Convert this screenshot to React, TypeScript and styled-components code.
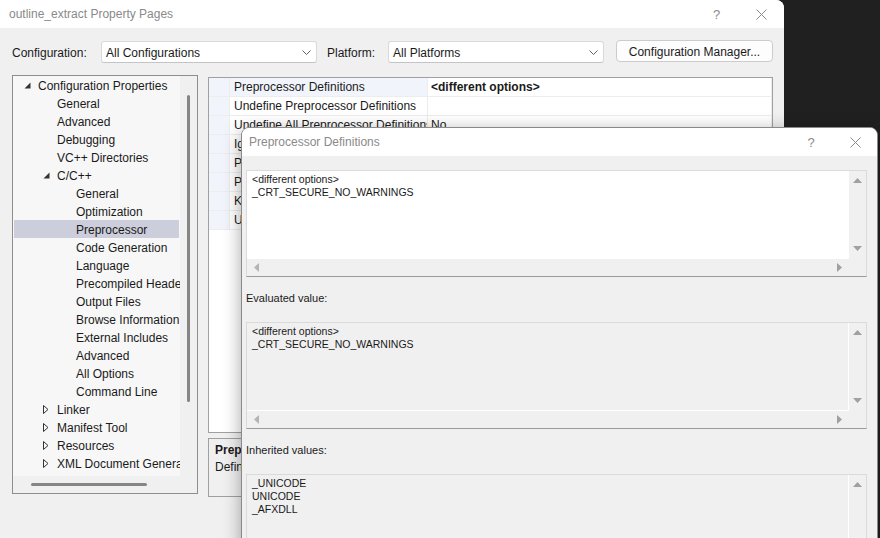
import React from "react";
import styled, { createGlobalStyle } from "styled-components";

const GlobalStyle = createGlobalStyle`
  html, body {
    margin: 0;
    padding: 0;
    background: #202020;
    overflow: hidden;
  }
  body {
    font-family: "Liberation Sans", Arial, sans-serif;
    font-size: 12px;
    color: #1a1a1a;
  }
`;

const Desktop = styled.div`
  position: relative;
  width: 880px;
  height: 538px;
  overflow: hidden;
  background: #202020;
`;

const Window = styled.div`
  width: 784px;
  height: 538px;
  background: #f0f0f0;
  border-top-right-radius: 8px;
  display: flex;
  flex-direction: column;
  overflow: hidden;
`;

const TitleBar = styled.div<{ $inset: number }>`
  height: 28px;
  flex: none;
  background: #fff;
  display: flex;
  align-items: center;
  padding-left: ${(p) => p.$inset}px;
  color: #8a8a8a;
`;

const TitleText = styled.span`
  flex: 1;
  white-space: nowrap;
`;

const CaptionButton = styled.div<{ $width: number }>`
  width: ${(p) => p.$width}px;
  height: 100%;
  display: flex;
  align-items: center;
  justify-content: center;
  color: #8a8a8a;
  font-size: 13px;
`;

const ConfigRow = styled.div`
  display: flex;
  align-items: center;
  padding: 13px 11px 0 12px;
  height: 22px;
`;

const FieldLabel = styled.span<{ $width: number; $inset?: number }>`
  width: ${(p) => p.$width}px;
  margin-left: ${(p) => p.$inset ?? 0}px;
  padding-top: 1px;
  white-space: nowrap;
`;

const Combo = styled.div`
  width: 216px;
  height: 22px;
  box-sizing: border-box;
  background: #fff;
  border: 1px solid #d9d9d9;
  border-bottom-color: #c4c4c4;
  border-radius: 3px;
  display: flex;
  align-items: center;
  justify-content: space-between;
  padding: 1px 5px 0 4px;
`;

const Button = styled.div`
  width: 157px;
  height: 22px;
  margin-left: 12px;
  margin-top: -2px;
  box-sizing: border-box;
  background: #fdfdfd;
  border: 1px solid #cccccc;
  border-radius: 4px;
  display: flex;
  align-items: center;
  justify-content: center;
  padding-top: 1px;
`;

const Body = styled.div`
  display: flex;
  gap: 10px;
  padding: 12px 11px 0 12px;
`;

const TreePanel = styled.div`
  width: 186px;
  height: 419px;
  box-sizing: border-box;
  border: 1px solid #8e8e8e;
  background: #f0f0f0;
  display: grid;
  grid-template-columns: 1fr 17px;
  grid-template-rows: 1fr 17px;
`;

const TreeList = styled.div`
  background: #f7f7f7;
  overflow: hidden;
  padding: 0 1px;
`;

const TreeRow = styled.div<{ $level: number; $selected?: boolean }>`
  height: 18px;
  display: flex;
  align-items: center;
  padding-left: ${(p) => 10 + p.$level * 19}px;
  padding-top: 1px;
  box-sizing: border-box;
  background: ${(p) => (p.$selected ? "#cccedb" : "transparent")};
  white-space: nowrap;
`;

const Expander = styled.span`
  width: 14px;
  flex: none;
  display: flex;
  align-items: center;
`;

const VTrack = styled.div`
  display: flex;
  justify-content: center;
`;

const VThumb = styled.div`
  margin-top: 19px;
  width: 3px;
  height: 307px;
  border-radius: 2px;
  background: #858585;
`;

const HTrack = styled.div`
  display: flex;
  align-items: center;
`;

const HThumb = styled.div`
  margin-left: 18px;
  width: 116px;
  height: 3px;
  border-radius: 2px;
  background: #858585;
`;

const RightColumn = styled.div`
  width: 565px;
  margin-top: 2px;
  display: flex;
  flex-direction: column;
  gap: 5px;
`;

const Grid = styled.div`
  height: 356px;
  box-sizing: border-box;
  border: 1px solid #a0a0a0;
  background: #fff;
  overflow: hidden;
`;

const GridRow = styled.div`
  display: grid;
  grid-template-columns: 21px 198px 1fr;
  height: 19px;
`;

const GridCell = styled.div<{ $tint?: boolean; $bold?: boolean; $pad?: number }>`
  box-sizing: border-box;
  border-bottom: 1px solid #ededed;
  border-right: 1px solid #ededed;
  background: ${(p) => (p.$tint ? "#f1f4fa" : "#fff")};
  font-weight: ${(p) => (p.$bold ? 700 : 400)};
  padding-left: ${(p) => p.$pad ?? 0}px;
  padding-top: 1px;
  line-height: 17px;
  white-space: nowrap;
  overflow: hidden;
`;

const Description = styled.div`
  height: 59px;
  box-sizing: border-box;
  border: 1px solid #a0a0a0;
  padding: 3px 6px 0;
  line-height: 17px;
  overflow: hidden;
`;

const DescTitle = styled.div`
  font-weight: 700;
`;

const Dialog = styled.div`
  position: absolute;
  left: 241px;
  top: 127px;
  width: 637px;
  height: 430px;
  box-sizing: border-box;
  border: 1px solid #8a8a8a;
  border-radius: 8px 8px 0 0;
  background: #f0f0f0;
  box-shadow: 0 4px 18px rgba(0, 0, 0, 0.35);
  overflow: hidden;
  display: flex;
  flex-direction: column;
`;

const DialogBody = styled.div`
  padding: 14px 10px 0 4px;
  display: flex;
  flex-direction: column;
`;

const SectionLabel = styled.div`
  font-size: 11px;
  line-height: 14px;
  padding: 14px 0 17px 0;
`;

const TextBox = styled.div`
  height: 107px;
  flex: none;
  box-sizing: border-box;
  border: 1px solid #dadada;
  border-bottom-color: #9a9a9a;
  background: #f0f0f0;
  display: grid;
  grid-template-columns: 1fr 17px;
  grid-template-rows: 1fr 17px;
`;

const TextContent = styled.div<{ $readonly?: boolean }>`
  background: ${(p) => (p.$readonly ? "#f0f0f0" : "#fff")};
  box-shadow: ${(p) => (p.$readonly ? "inset -1px -1px 0 #fff" : "none")};
  padding: 2px 5px;
  font-size: 10.5px;
  line-height: 13px;
  white-space: pre;
  overflow: hidden;
`;

const VScroll = styled.div`
  display: flex;
  flex-direction: column;
  align-items: center;
  justify-content: space-between;
  padding: 7px 0 8px;
`;

const HScroll = styled.div`
  display: flex;
  align-items: center;
  justify-content: space-between;
  padding: 0 7px;
`;

const Chevron = () => (
  <svg width="9" height="5" viewBox="0 0 9 5">
    <polyline points="0.5,0.5 4.5,4.5 8.5,0.5" fill="none" stroke="#606060" strokeWidth="1" />
  </svg>
);

const CloseGlyph = () => (
  <svg width="11" height="11" viewBox="0 0 11 11">
    <path d="M0.5 0.5 L10.5 10.5 M10.5 0.5 L0.5 10.5" stroke="#8a8a8a" strokeWidth="1" />
  </svg>
);

const ExpandedGlyph = () => (
  <svg width="7" height="7" viewBox="0 0 7 7">
    <polygon points="6.5,0.5 6.5,6.5 0.5,6.5" fill="#333" />
  </svg>
);

const CollapsedGlyph = () => (
  <svg width="6" height="9" viewBox="0 0 6 9">
    <polygon points="0.5,0.5 5,4.5 0.5,8.5" fill="none" stroke="#333" strokeWidth="1" />
  </svg>
);

const Arrow = ({ dir, light }: { dir: "up" | "down" | "left" | "right"; light?: boolean }) => {
  const pts = {
    up: "4.5,0 9,5 0,5",
    down: "0,0 9,0 4.5,5",
    left: "5,0 5,9 0,4.5",
    right: "0,0 5,4.5 0,9",
  }[dir];
  const vertical = dir === "up" || dir === "down";
  return (
    <svg width={vertical ? 9 : 5} height={vertical ? 5 : 9} viewBox={vertical ? "0 0 9 5" : "0 0 5 9"}>
      <polygon points={pts} fill={light ? "#b4b4b4" : "#a0a0a0"} />
    </svg>
  );
};

type TreeItem = { label: string; level: number; state?: "open" | "closed"; selected?: boolean };

const tree: TreeItem[] = [
  { label: "Configuration Properties", level: 0, state: "open" },
  { label: "General", level: 1 },
  { label: "Advanced", level: 1 },
  { label: "Debugging", level: 1 },
  { label: "VC++ Directories", level: 1 },
  { label: "C/C++", level: 1, state: "open" },
  { label: "General", level: 2 },
  { label: "Optimization", level: 2 },
  { label: "Preprocessor", level: 2, selected: true },
  { label: "Code Generation", level: 2 },
  { label: "Language", level: 2 },
  { label: "Precompiled Headers", level: 2 },
  { label: "Output Files", level: 2 },
  { label: "Browse Information", level: 2 },
  { label: "External Includes", level: 2 },
  { label: "Advanced", level: 2 },
  { label: "All Options", level: 2 },
  { label: "Command Line", level: 2 },
  { label: "Linker", level: 1, state: "closed" },
  { label: "Manifest Tool", level: 1, state: "closed" },
  { label: "Resources", level: 1, state: "closed" },
  { label: "XML Document Generator", level: 1, state: "closed" },
];

const properties: { name: string; value: string; bold?: boolean }[] = [
  { name: "Preprocessor Definitions", value: "<different options>", bold: true },
  { name: "Undefine Preprocessor Definitions", value: "" },
  { name: "Undefine All Preprocessor Definitions", value: "No" },
  { name: "Ignore Standard Include Paths", value: "No" },
  { name: "Preprocess to a File", value: "No" },
  { name: "Preprocess Suppress Line Numbers", value: "No" },
  { name: "Keep Comments", value: "No" },
  { name: "Use Standard Conformant Preprocessor", value: "Yes" },
];

const ScrollText = ({ text, readonly }: { text: string; readonly?: boolean }) => (
  <TextBox>
    <TextContent $readonly={readonly}>{text}</TextContent>
    <VScroll>
      <Arrow dir="up" />
      <Arrow dir="down" />
    </VScroll>
    <HScroll>
      <Arrow dir="left" light />
      <Arrow dir="right" />
    </HScroll>
    <div />
  </TextBox>
);

export default function App() {
  return (
    <>
      <GlobalStyle />
      <Desktop>
        <Window>
          <TitleBar $inset={9}>
            <TitleText>outline_extract Property Pages</TitleText>
            <CaptionButton $width={45}>?</CaptionButton>
            <CaptionButton $width={45}>
              <CloseGlyph />
            </CaptionButton>
          </TitleBar>

          <ConfigRow>
            <FieldLabel $width={89}>Configuration:</FieldLabel>
            <Combo>
              <span>All Configurations</span>
              <Chevron />
            </Combo>
            <FieldLabel $width={61} $inset={10}>
              Platform:
            </FieldLabel>
            <Combo>
              <span>All Platforms</span>
              <Chevron />
            </Combo>
            <Button>Configuration Manager...</Button>
          </ConfigRow>

          <Body>
            <TreePanel>
              <TreeList>
                {tree.map((item, i) => (
                  <TreeRow key={i} $level={item.level} $selected={item.selected}>
                    <Expander>
                      {item.state === "open" && <ExpandedGlyph />}
                      {item.state === "closed" && <CollapsedGlyph />}
                    </Expander>
                    {item.label}
                  </TreeRow>
                ))}
              </TreeList>
              <VTrack>
                <VThumb />
              </VTrack>
              <HTrack>
                <HThumb />
              </HTrack>
              <div />
            </TreePanel>

            <RightColumn>
              <Grid>
                {properties.map((p, i) => (
                  <GridRow key={i}>
                    <GridCell $tint />
                    <GridCell $tint={i === 0} $pad={4}>
                      {p.name}
                    </GridCell>
                    <GridCell $bold={p.bold} $pad={3}>
                      {p.value}
                    </GridCell>
                  </GridRow>
                ))}
              </Grid>
              <Description>
                <DescTitle>Preprocessor Definitions</DescTitle>
                <div>Defines a preprocessing symbols for your source file.</div>
              </Description>
            </RightColumn>
          </Body>
        </Window>

        <Dialog>
          <TitleBar $inset={7}>
            <TitleText>Preprocessor Definitions</TitleText>
            <CaptionButton $width={44}>?</CaptionButton>
            <CaptionButton $width={44}>
              <CloseGlyph />
            </CaptionButton>
          </TitleBar>
          <DialogBody>
            <ScrollText text={"<different options>\n_CRT_SECURE_NO_WARNINGS"} />
            <SectionLabel>Evaluated value:</SectionLabel>
            <ScrollText readonly text={"<different options>\n_CRT_SECURE_NO_WARNINGS"} />
            <SectionLabel>Inherited values:</SectionLabel>
            <ScrollText readonly text={"_UNICODE\nUNICODE\n_AFXDLL"} />
          </DialogBody>
        </Dialog>
      </Desktop>
    </>
  );
}
